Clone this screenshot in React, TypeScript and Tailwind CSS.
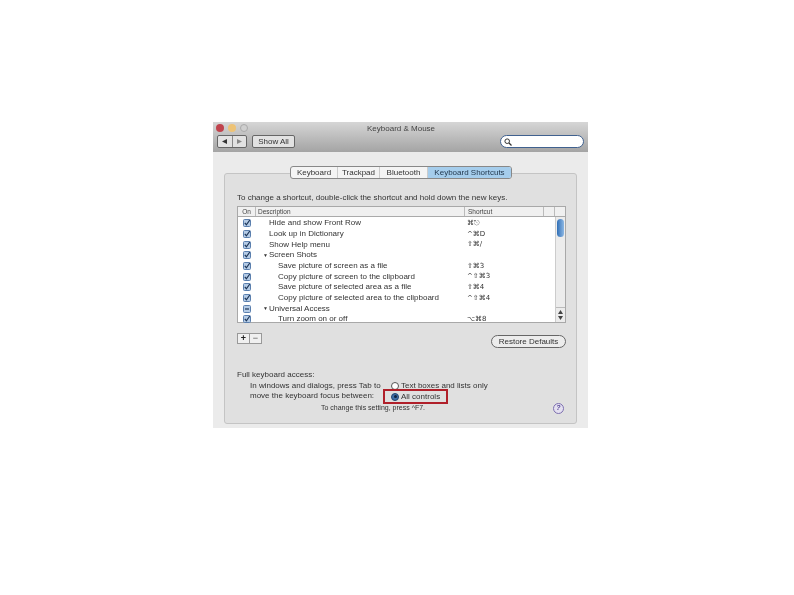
const rows = [
  { state: "on", level: 1, label: "Hide and show Front Row", keys: "⌘⎋" },
  { state: "on", level: 1, label: "Look up in Dictionary", keys: "^⌘D" },
  { state: "on", level: 1, label: "Show Help menu", keys: "⇧⌘/" },
  { state: "on", level: 0, label: "Screen Shots", keys: "" },
  { state: "on", level: 2, label: "Save picture of screen as a file", keys: "⇧⌘3" },
  { state: "on", level: 2, label: "Copy picture of screen to the clipboard", keys: "^⇧⌘3" },
  { state: "on", level: 2, label: "Save picture of selected area as a file", keys: "⇧⌘4" },
  { state: "on", level: 2, label: "Copy picture of selected area to the clipboard", keys: "^⇧⌘4" },
  { state: "mixed", level: 0, label: "Universal Access", keys: "" },
  { state: "on", level: 2, label: "Turn zoom on or off", keys: "⌥⌘8" },
];

const Check = ({ state }: { state: string }) => (
  <svg width="8" height="8" viewBox="0 0 8 8">
    <rect x="0.5" y="0.5" width="7" height="7" rx="1" fill="#b4cbe6" stroke="#5a7fae" />
    {state === "on" ? (
      <path d="M1.8 3.8 L3.4 5.8 L6.8 1" fill="none" stroke="#1c3557" strokeWidth="1.2" />
    ) : (
      <path d="M2 4 H6" stroke="#1c3557" strokeWidth="1.2" />
    )}
  </svg>
);

const Arrow = ({ up }: { up?: boolean }) => (
  <svg width="5" height="4" viewBox="0 0 5 4">
    <path d={up ? "M2.5 0 L5 4 H0 Z" : "M0 0 H5 L2.5 4 Z"} fill="#444" />
  </svg>
);

const App = () => {
  return (
    <div className="w-[794px] h-[595px] bg-white pt-[122px] pl-[213px] overflow-hidden font-['Liberation_Sans',sans-serif] text-[#333] blur-[0.4px]">
      <div className="w-[375px] h-[306px] bg-[#ebebeb] flex flex-col">
        {/* toolbar */}
        <div className="h-[30px] shrink-0 bg-gradient-to-b from-[#d6d6d6] to-[#a4a4a4] pl-[3px] pr-[4px] pt-[2px]">
          <div className="flex items-start h-[10px] relative">
            <span className="w-[8px] h-[8px] rounded-full bg-[#c0434d]" />
            <span className="w-[8px] h-[8px] rounded-full bg-[#eec376] ml-[4px]" />
            <span className="w-[8px] h-[8px] rounded-full bg-[#cfcfcf] border border-[#aaa] ml-[4px]" />
            <span className="absolute left-[151px] top-[0px] text-[8px] leading-[10px] text-[#444]">
              Keyboard &amp; Mouse
            </span>
          </div>
          <div className="flex items-center mt-[1px]">
            <div className="w-[30px] h-[13px] ml-[1px] flex border border-[#666] rounded-[2px] bg-[#e2e2e2]">
              <span className="flex-1 flex items-center justify-center border-r border-[#888]">
                <svg width="5" height="5" viewBox="0 0 5 5"><path d="M0 2.5 L5 0 V5 Z" fill="#333" /></svg>
              </span>
              <span className="flex-1 flex items-center justify-center">
                <svg width="5" height="5" viewBox="0 0 5 5"><path d="M5 2.5 L0 0 V5 Z" fill="#888" /></svg>
              </span>
            </div>
            <div className="ml-[5px] w-[43px] h-[13px] border border-[#666] rounded-[2px] bg-[#e2e2e2] flex items-center justify-center text-[8px] text-[#333]">
              Show All
            </div>
            <div className="ml-auto w-[84px] h-[13px] rounded-full border border-[#40618f] bg-white flex items-center pl-[3px]">
              <svg width="8" height="8" viewBox="0 0 8 8">
                <circle cx="3.2" cy="3.2" r="2.3" fill="none" stroke="#333" />
                <path d="M5 5 L7.5 7.5" stroke="#333" strokeWidth="1.2" />
              </svg>
            </div>
          </div>
        </div>

        {/* panel */}
        <div className="px-[11px] pt-[21px]">
          <div className="h-[251px] border border-[#c4c4c4] rounded-[3px] bg-[#e0e0e0] relative px-[12px]">
            <div className="absolute -top-[8px] left-[65px] h-[13px] w-[222px] flex items-center border border-[#888] rounded-[3px] bg-[#f4f4f4] text-[8px] text-[#333] overflow-hidden">
              <span className="w-[47px] text-center border-r border-[#ccc]">Keyboard</span>
              <span className="w-[42px] text-center border-r border-[#ccc]">Trackpad</span>
              <span className="w-[48px] text-center border-r border-[#ccc]">Bluetooth</span>
              <span className="flex-1 h-full bg-[#a5cdec] flex items-center justify-center text-[#23394f]">Keyboard Shortcuts</span>
            </div>

            <p className="pt-[19px] text-[8px] leading-[10px] whitespace-nowrap">
              To change a shortcut, double-click the shortcut and hold down the new keys.
            </p>

            {/* table */}
            <div className="mt-[3px] w-[329px] h-[117px] border border-[#a8a8a8] bg-white flex flex-col">
              <div className="h-[10px] flex items-center text-[6.5px] bg-[#f0f0f0] border-b border-[#aaa] text-[#444] shrink-0">
                <span className="w-[18px] text-center border-r border-[#bbb]">On</span>
                <span className="w-[209px] pl-[2px] border-r border-[#bbb]">Description</span>
                <span className="w-[79px] pl-[3px] border-r border-[#bbb]">Shortcut</span>
                <span className="w-[11px] border-r border-[#bbb] h-full" />
              </div>
              <div className="flex flex-1 min-h-0">
                <div className="flex-1 pt-[1px]">
                  {rows.map((row) => (
                    <div key={row.label} className="h-[10.67px] flex items-center text-[8px] whitespace-nowrap">
                      <span className="w-[18px] flex justify-center shrink-0">
                        <Check state={row.state} />
                      </span>
                      <span
                        className={`w-[209px] flex items-center ${
                          row.level === 2 ? "pl-[22px]" : row.level === 1 ? "pl-[13px]" : "pl-[7px]"
                        }`}
                      >
                        {row.level === 0 && <span className="text-[5px] mr-[1px]">▼</span>}
                        {row.label}
                      </span>
                      <span className="pl-[2px] text-[7px] font-['DejaVu_Sans',sans-serif]">{row.keys}</span>
                    </div>
                  ))}
                </div>
                <div className="w-[10px] shrink-0 bg-[#ececec] border-l border-[#ccc] flex flex-col items-center">
                  <div className="w-[7px] h-[18px] mt-[2px] rounded-full bg-gradient-to-r from-[#2f6fb6] to-[#8db8e4]" />
                  <div className="mt-auto w-full flex flex-col items-center gap-[2px] pb-[2px] border-t border-[#bbb] pt-[2px]">
                    <Arrow up />
                    <Arrow />
                  </div>
                </div>
              </div>
            </div>

            {/* buttons */}
            <div className="mt-[10px] flex items-start justify-between w-[329px]">
              <div className="w-[25px] h-[11px] flex border border-[#999] bg-[#f0f0f0] text-[9px] leading-[9px] font-bold">
                <span className="flex-1 text-center border-r border-[#999] text-[#222]">+</span>
                <span className="flex-1 text-center text-[#888]">−</span>
              </div>
              <div className="mt-[2px] w-[75px] h-[13px] rounded-full border border-[#666] bg-[#ececec] flex items-center justify-center text-[8px] whitespace-nowrap">
                Restore Defaults
              </div>
            </div>

            {/* keyboard access */}
            <p className="mt-[22px] text-[8px] leading-[10px]">Full keyboard access:</p>
            <div className="flex text-[8px] whitespace-nowrap">
              <div className="w-[145px] pl-[13px] pt-[1px] leading-[10px]">
                <div>In windows and dialogs, press Tab to</div>
                <div>move the keyboard focus between:</div>
              </div>
              <div className="ml-[9px] leading-[11px]">
                <div className="flex items-center">
                  <span className="w-[8px] h-[8px] rounded-full border border-[#555] bg-white" />
                  <span className="ml-[2px]">Text boxes and lists only</span>
                </div>
                <div className="flex items-center relative">
                  <span className="w-[8px] h-[8px] rounded-full bg-[#3f6fa8] border border-[#23466f] flex items-center justify-center">
                    <span className="w-[3px] h-[3px] rounded-full bg-[#10233f]" />
                  </span>
                  <span className="ml-[2px]">All controls</span>
                  <span className="absolute -left-[8px] -top-[2px] w-[65px] h-[15px] border-2 border-[#b0202a]" />
                </div>
              </div>
            </div>
            <div className="flex items-center mt-[1px] w-[329px]">
              <p className="ml-[84px] text-[7px] whitespace-nowrap">To change this setting, press ^F7.</p>
              <span className="ml-auto mr-[2px] w-[11px] h-[11px] rounded-full border border-[#7d6fb0] bg-[#e4e0f0] flex items-center justify-center text-[7px] font-bold text-[#5a4a98] italic">?</span>
            </div>
          </div>
        </div>
      </div>
    </div>
  );
};

export default App;
